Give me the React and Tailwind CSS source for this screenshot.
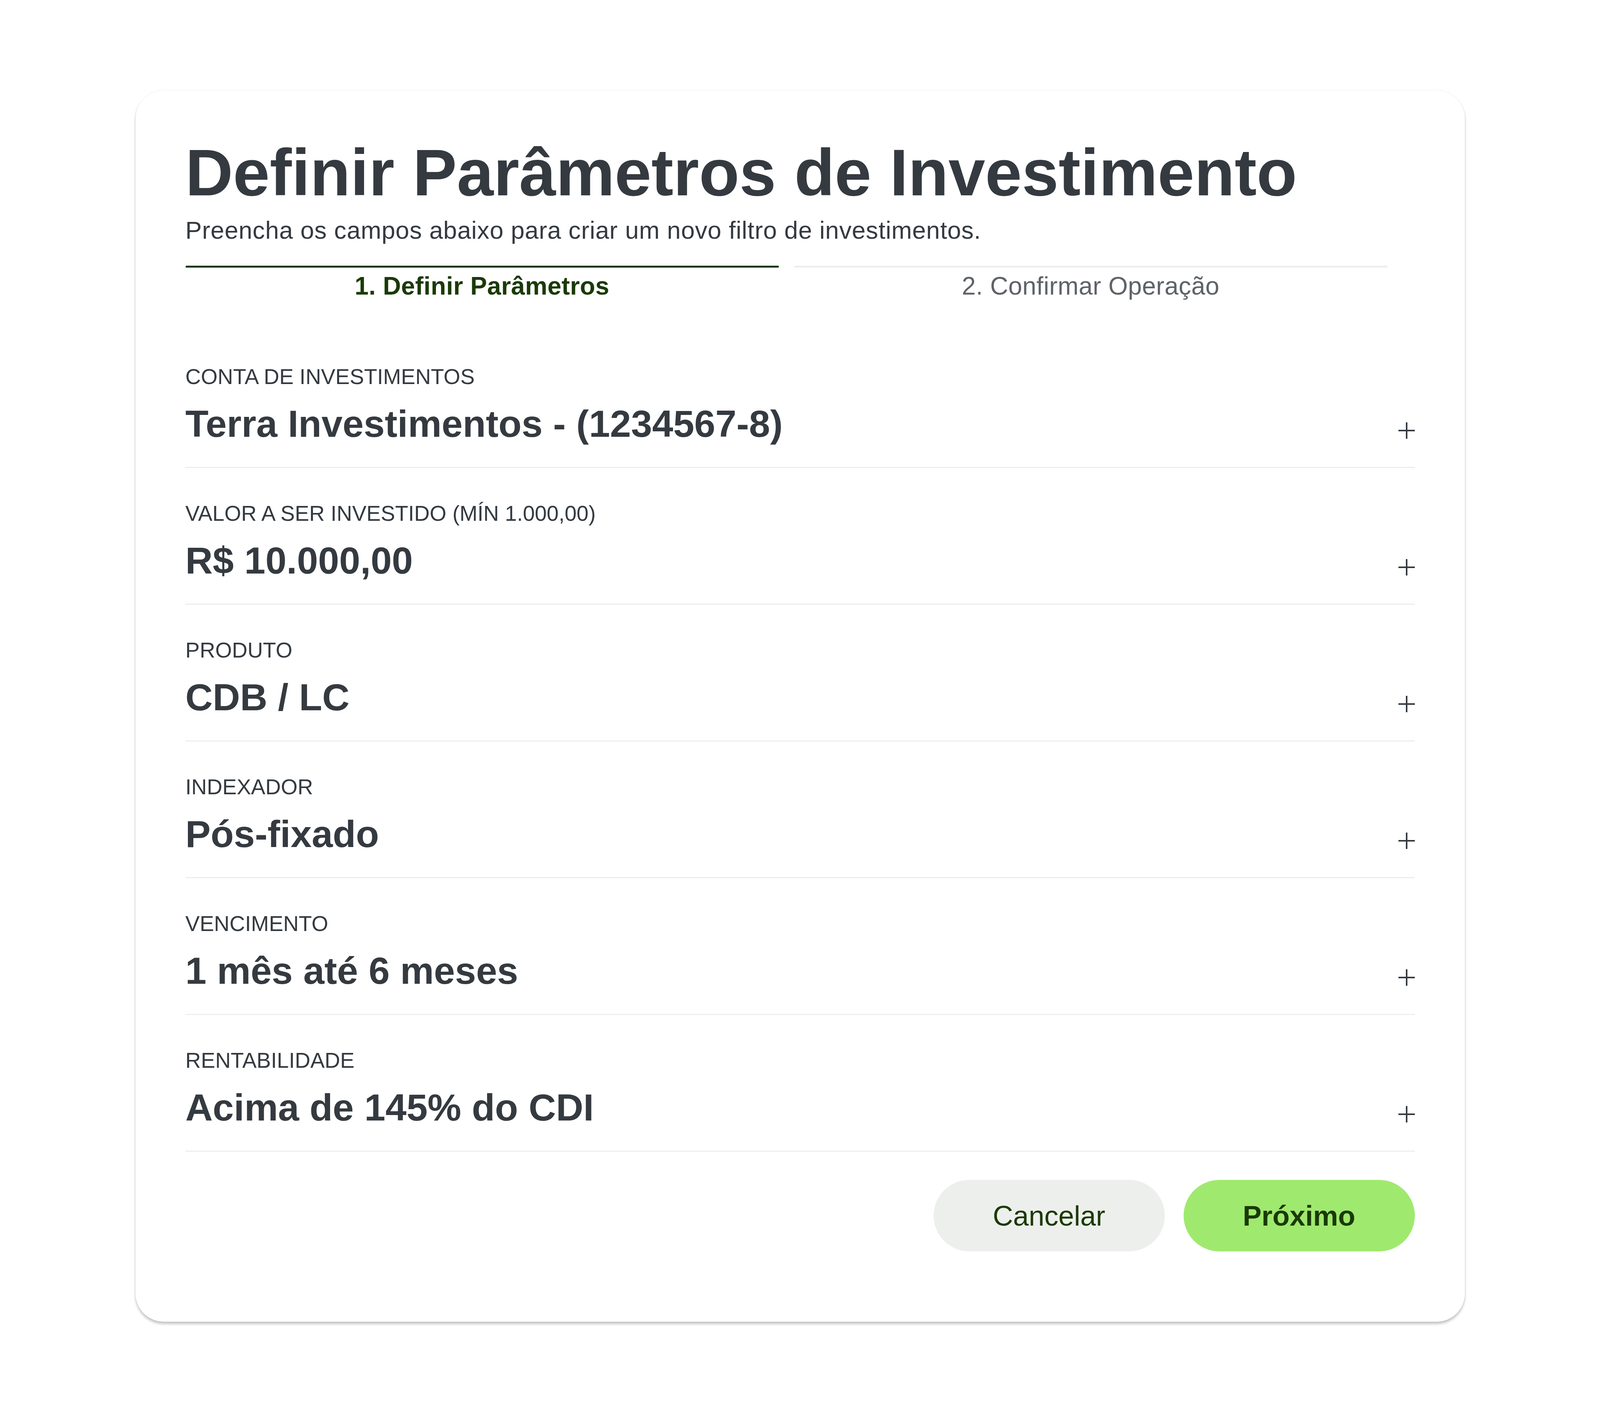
import React from 'react'

const fields = [
  { label: 'CONTA DE INVESTIMENTOS', value: 'Terra Investimentos - (1234567-8)' },
  { label: 'VALOR A SER INVESTIDO (MÍN 1.000,00)', value: 'R$ 10.000,00' },
  { label: 'PRODUTO', value: 'CDB / LC' },
  { label: 'INDEXADOR', value: 'Pós-fixado' },
  { label: 'VENCIMENTO', value: '1 mês até 6 meses' },
  { label: 'RENTABILIDADE', value: 'Acima de 145% do CDI' },
]

function PlusIcon() {
  return (
    <svg width="42" height="42" viewBox="0 0 42 42" fill="none">
      <line x1="21" y1="0" x2="21" y2="42" stroke="#343a40" strokeWidth="4" />
      <line x1="0" y1="21" x2="42" y2="21" stroke="#343a40" strokeWidth="4" />
    </svg>
  )
}

function Field({ label, value }) {
  return (
    <div className="flex items-end justify-between pt-[89px] pb-[62px] border-b-[3px] border-[#eeeeee]">
      <div className="flex flex-col">
        <span className="text-[55px] leading-none text-[#343a40]">{label}</span>
        <span className="mt-[44px] text-[97px] leading-none font-bold text-[#343a40]">{value}</span>
      </div>
      <div className="mb-[10px]">
        <PlusIcon />
      </div>
    </div>
  )
}

export default function App() {
  return (
    <div
      className="min-h-screen bg-white pt-[232px]"
      style={{ fontFamily: '"Liberation Sans", Arial, sans-serif' }}
    >
      <div className="mx-auto w-[3403px] rounded-[72px] bg-white px-[128px] pt-[125px] pb-[180px] shadow-[0_6px_6px_rgba(0,0,0,0.22),0_0_4px_rgba(0,0,0,0.08)]">
        <h1 className="text-[169px] leading-none font-bold text-[#343a40]">
          Definir Parâmetros de Investimento
        </h1>
        <p className="mt-[32px] text-[63px] leading-none tracking-[0.8px] text-[#343a40]">
          Preencha os campos abaixo para criar um novo filtro de investimentos.
        </p>

        <div className="mt-[59px] flex w-[3077px] gap-[39px]">
          <div className="flex flex-1 flex-col items-center">
            <div className="h-[5px] w-full rounded-full bg-[#1a3a06]" />
            <span className="mt-[15px] text-[64px] leading-none tracking-[0.4px] font-bold text-[#1a3a06]">
              1. Definir Parâmetros
            </span>
          </div>
          <div className="flex flex-1 flex-col items-center">
            <div className="h-[5px] w-full rounded-full bg-[#eeeeee]" />
            <span className="mt-[15px] text-[64px] leading-none tracking-[0.4px] text-[#5f6368]">
              2. Confirmar Operação
            </span>
          </div>
        </div>

        <div className="mt-[84px] flex flex-col">
          {fields.map((f) => (
            <Field key={f.label} label={f.label} value={f.value} />
          ))}
        </div>

        <div className="mt-[72px] flex justify-end gap-[48px]">
          <button className="flex h-[183px] w-[592px] items-center justify-center rounded-full bg-[#edefec] text-[72px] leading-none text-[#1a3a06]">
            Cancelar
          </button>
          <button className="flex h-[183px] w-[592px] items-center justify-center rounded-full bg-[#a0e96f] text-[72px] leading-none font-bold text-[#1a3a06]">
            Próximo
          </button>
        </div>
      </div>
    </div>
  )
}
